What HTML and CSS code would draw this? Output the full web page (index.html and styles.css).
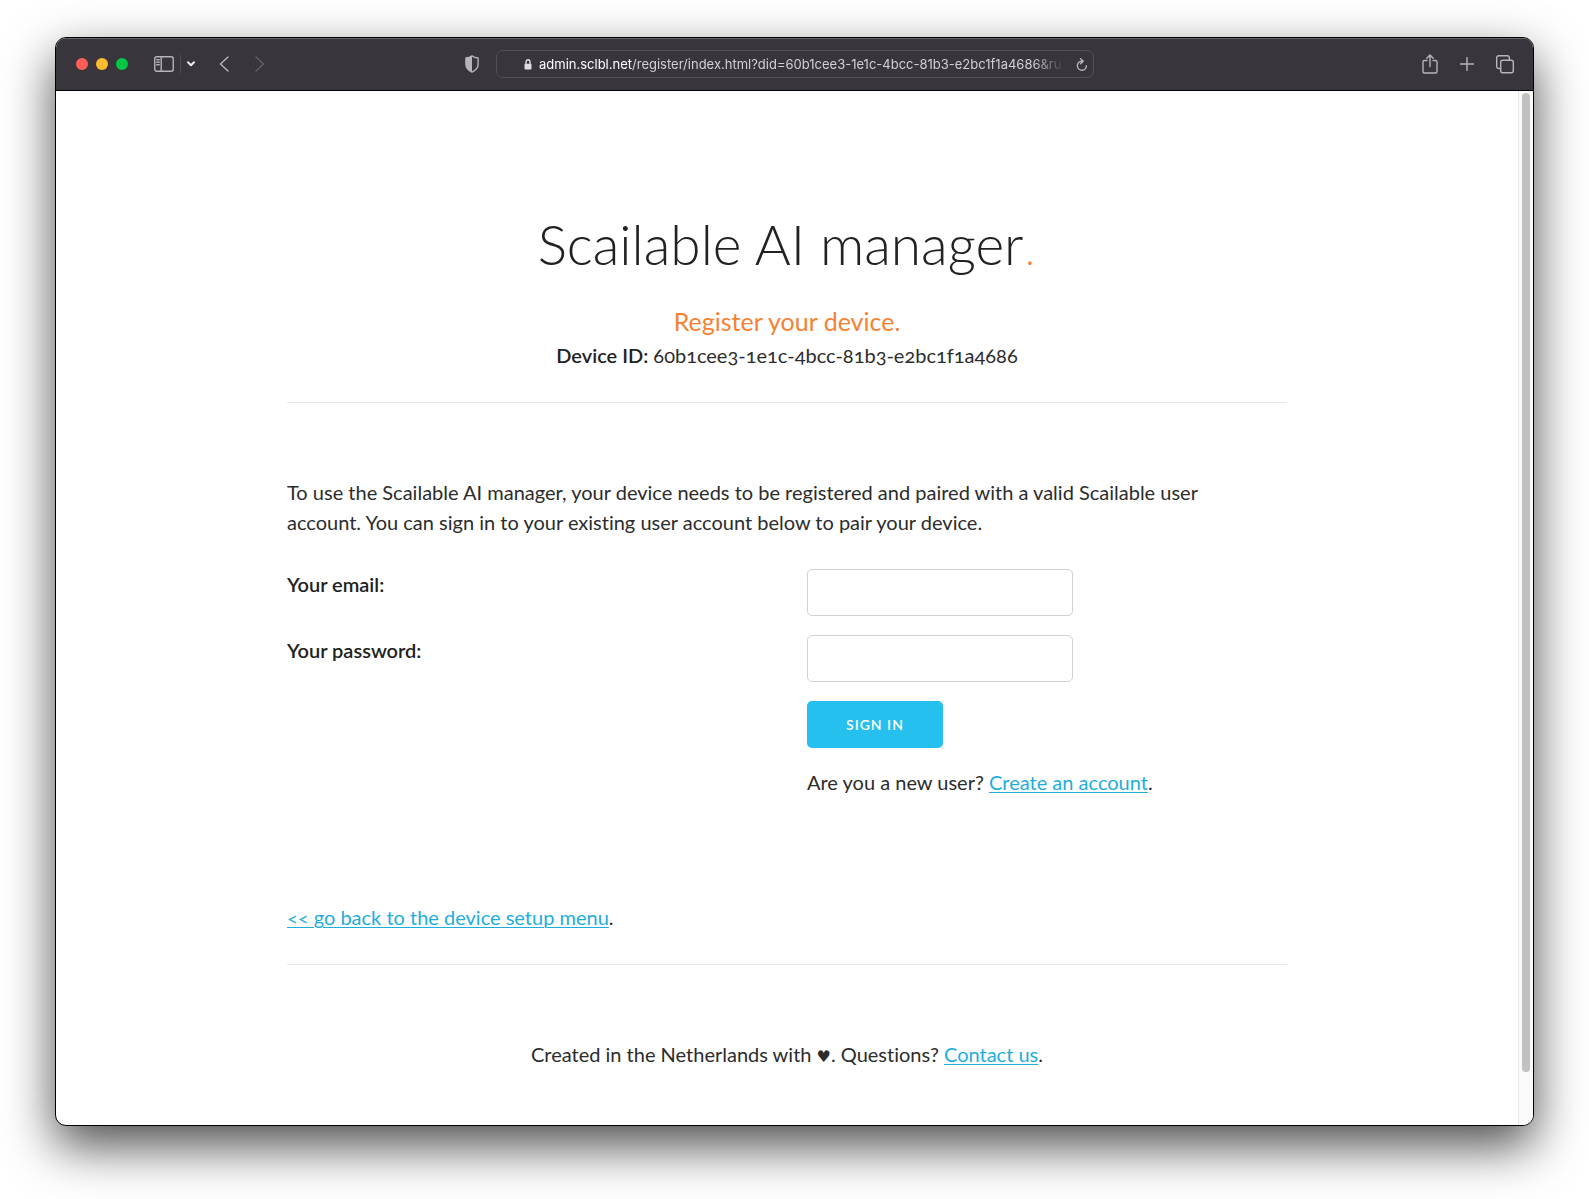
FILE: index.html
```html
<!DOCTYPE html>
<html lang="en">
<head>
<meta charset="utf-8">
<title>Scailable AI manager</title>
<link rel="stylesheet" href="styles.css">
</head>
<body>
<div class="window">
  <header class="toolbar">
    <div class="toolbar-side">
      <div class="lights"><span class="light red"></span><span class="light yellow"></span><span class="light green"></span></div>
      <div class="sidebar-tools">
        <button class="tool" type="button" aria-label="Show sidebar"><svg width="20" height="16" viewBox="0 0 20 16"><rect x=".75" y=".75" width="18.5" height="14.5" rx="2"/><path d="M7.2 1v14M2.8 3.7h2.4M2.8 6.2h2.4M2.8 8.7h2.4"/></svg></button>
        <span class="divider"></span>
        <button class="tool" type="button" aria-label="Tab groups"><svg class="bright" width="8" height="6" viewBox="0 0 8 6"><path d="M1 1.2l3 3 3-3"/></svg></button>
      </div>
      <div class="history">
        <button class="tool" type="button" aria-label="Back"><svg width="10" height="16" viewBox="0 0 10 16"><path d="M9 1L1.5 8 9 15"/></svg></button>
        <button class="tool" type="button" aria-label="Forward" disabled><svg width="10" height="16" viewBox="0 0 10 16"><path d="M1 1l7.500 7L1 15"/></svg></button>
      </div>
    </div>
    <div class="toolbar-center">
      <button class="tool" type="button" aria-label="Privacy report"><svg width="14" height="18" viewBox="0 0 14 18"><path d="M7 .9C5.300 2.200 3.200 2.900.900 3v6.500c0 3.400 2.500 5.800 6.100 7.600 3.600-1.800 6.100-4.200 6.100-7.600V3C10.800 2.900 8.700 2.200 7 .9z"/><path class="solid" d="M7 1C5.300 2.200 3.200 2.900 1 3v6.500c0 3.400 2.400 5.700 6 7.500z"/></svg></button>
      <div class="address">
        <svg class="lock" width="8" height="11" viewBox="0 0 8 11"><path d="M2 5V3a2 2.200 0 0 1 4 0v2"/><rect class="solid" x=".5" y="4.800" width="7" height="5.700" rx="1"/></svg>
        <span class="url"><span class="host">admin.sclbl.net</span>/register/index.html?did=60b1cee3-1e1c-4bcc-81b3-e2bc1f1a4686&amp;ru</span>
        <button class="tool" type="button" aria-label="Reload"><svg width="12" height="13" viewBox="0 0 12 13"><path d="M5.500 3.200A4.500 4.500 0 1 0 10.400 7.600M4.600.8l2.700 2.500-2.700 2.500"/></svg></button>
      </div>
    </div>
    <div class="toolbar-side actions">
      <button class="tool" type="button" aria-label="Share"><svg width="16" height="20" viewBox="0 0 16 20"><path d="M5 6.500H2.500A1.500 1.500 0 0 0 1 8v9.500A1.500 1.500 0 0 0 2.500 19h11a1.500 1.500 0 0 0 1.500-1.500V8a1.500 1.500 0 0 0-1.500-1.500H11M8 12.500V1.200M4.800 4.300L8 1l3.200 3.300"/></svg></button>
      <button class="tool" type="button" aria-label="New tab"><svg width="14" height="14" viewBox="0 0 14 14"><path d="M7 0v14M0 7h14"/></svg></button>
      <button class="tool" type="button" aria-label="Tab overview"><svg width="18" height="19" viewBox="0 0 18 19"><rect x="4.700" y="5.200" width="12.600" height="12.600" rx="2"/><path d="M4.500 13.500H2.700a2 2 0 0 1-2-2V2.700a2 2 0 0 1 2-2h8.600a2 2 0 0 1 2 2V5"/></svg></button>
    </div>
  </header>
  <div class="viewport">
    <main class="page">
      <div class="container">
        <section class="intro">
          <h1>Scailable AI manager<span class="accent">.</span></h1>
          <h2>Register your device.</h2>
          <p><strong>Device ID:</strong> 60b1cee3-1e1c-4bcc-81b3-e2bc1f1a4686</p>
        </section>
        <hr>
        <section class="register">
          <p class="lead">To use the Scailable AI manager, your device needs to be registered and paired with a valid Scailable user account. You can sign in to your existing user account below to pair your device.</p>
          <form class="form">
            <label for="email">Your email:</label>
            <input id="email" type="email">
            <label for="password">Your password:</label>
            <input id="password" type="password">
            <button class="primary" type="submit">Sign in</button>
            <p class="signup">Are you a new user? <a href="#">Create an account</a>.</p>
          </form>
          <p><a href="#">&lt;&lt; go back to the device setup menu</a>.</p>
        </section>
        <hr>
        <footer class="footer">Created in the Netherlands with <span class="heart">♥</span>. Questions? <a href="#">Contact us</a>.</footer>
      </div>
    </main>
    <div class="scrollbar"><span class="thumb"></span><span class="rest"></span></div>
  </div>
</div>
</body>
</html>
```

FILE: styles.css
```css
* { box-sizing: border-box; }

body {
  margin: 0;
  min-height: 100vh;
  padding: 37px 55px 73px;
  display: flex;
  background: #fff;
  color: #2c2c2c;
  font: 400 20px/30px Lato, "Open Sans", sans-serif;
  font-variant-numeric: oldstyle-nums;
  font-variant-ligatures: none;
}

h1, h2, p { margin: 0; }
h1, strong, label { color: #222; }
strong, label { font-weight: 600; }
a { color: #1eaedb; text-decoration-thickness: 1px; text-underline-offset: 2px; }
button, input { font: inherit; }

.window {
  flex: 1;
  min-width: 0;
  display: flex;
  flex-direction: column;
  overflow: hidden;
  border: 1px solid #000;
  border-radius: 11px;
  background: #fff;
  box-shadow: 0 20px 50px rgba(0, 0, 0, .7);
}

/* Browser toolbar */
.toolbar {
  display: grid;
  grid-template-columns: 409fr 629px 439fr;
  align-items: center;
  height: 53px;
  background: #39353c;
  border-bottom: 1px solid #000;
  box-shadow: inset 0 1px #69666b;
}
.toolbar-side { display: flex; align-items: center; padding: 0 19px 0 20px; }
.lights { display: flex; gap: 8px; }
.light { width: 12px; height: 12px; border-radius: 50%; }
.red { background: #ff5f57; }
.yellow { background: #febc2e; }
.green { background: #00c840; }
.sidebar-tools { display: flex; align-items: center; gap: 6px; margin-left: 26px; }
.divider { width: 1px; height: 18px; background: #504c53; }
.history { display: flex; gap: 26px; margin-left: 24px; }
.tool { display: flex; padding: 0; border: 0; background: none; color: #b7b5b8; }
.tool:disabled { color: #625f65; }
.toolbar svg { flex: none; fill: none; stroke: currentColor; stroke-width: 1.4; stroke-linecap: round; stroke-linejoin: round; }
.toolbar .solid { fill: currentColor; stroke: none; }
.toolbar .bright { color: #eee; stroke-width: 2; }
.toolbar-center { display: flex; align-items: center; gap: 17px; }
.address {
  flex: 1;
  min-width: 0;
  display: flex;
  align-items: center;
  height: 28px;
  padding: 0 5px 0 27px;
  border: 1px solid #545157;
  border-radius: 7px;
}
.address .lock { margin-right: 7px; color: #dedddf; }
.url {
  flex: 1;
  overflow: hidden;
  white-space: nowrap;
  color: #d2d0d4;
  font: 400 13px/20px Inter, sans-serif;
  -webkit-mask-image: linear-gradient(to right, #000 94%, transparent 100%);
  mask-image: linear-gradient(to right, #000 94%, transparent 100%);
}
.host { color: #fff; }
.address .tool { margin-left: 12px; }
.actions { justify-content: flex-end; gap: 22px; }

/* Page area and its scrollbar */
.viewport { flex: 1; display: flex; }
.page { flex: 1; min-width: 0; padding: 123px 20px 48px; }
.container { max-width: 1000px; margin: 0 auto; }
.scrollbar {
  width: 15px;
  display: flex;
  flex-direction: column;
  padding: 2px 3px;
  background: #fafafa;
  border-left: 1px solid #e8e8e8;
}
.thumb { flex: 95; border-radius: 4px; background: #c1c1c1; }
.rest { flex: 5; }

hr { margin: 32px 0 74px; border: 0; border-top: 1px solid #e8e8e8; }

.intro { text-align: center; }
h1 { margin-bottom: 28px; font-size: 55px; font-weight: 300; line-height: 60px; }
h2 { color: #f58233; font-size: 25px; font-weight: 400; line-height: 38px; }
.accent { color: #f58233; font-weight: 100; }
.lead { max-width: 960px; }

.form {
  display: grid;
  grid-template-columns: 1fr 1fr;
  gap: 19px 40px;
  align-items: start;
  justify-items: start;
  margin: 32px 0 105px;
}
.form input {
  width: 266px;
  height: 47px;
  padding: 6px 12px;
  border: 1px solid #d1d1d1;
  border-radius: 5px;
  background: #fff;
}
.primary, .signup { grid-column: 2; }
.primary {
  height: 47px;
  padding: 0 39px;
  border: 0;
  border-radius: 5px;
  background: #25c0ed;
  color: #fff;
  font-size: 14px;
  font-weight: 600;
  letter-spacing: 1px;
  text-transform: uppercase;
}
.footer { text-align: center; }
.heart { font-family: "DejaVu Sans", sans-serif; font-size: 16px; }
```
